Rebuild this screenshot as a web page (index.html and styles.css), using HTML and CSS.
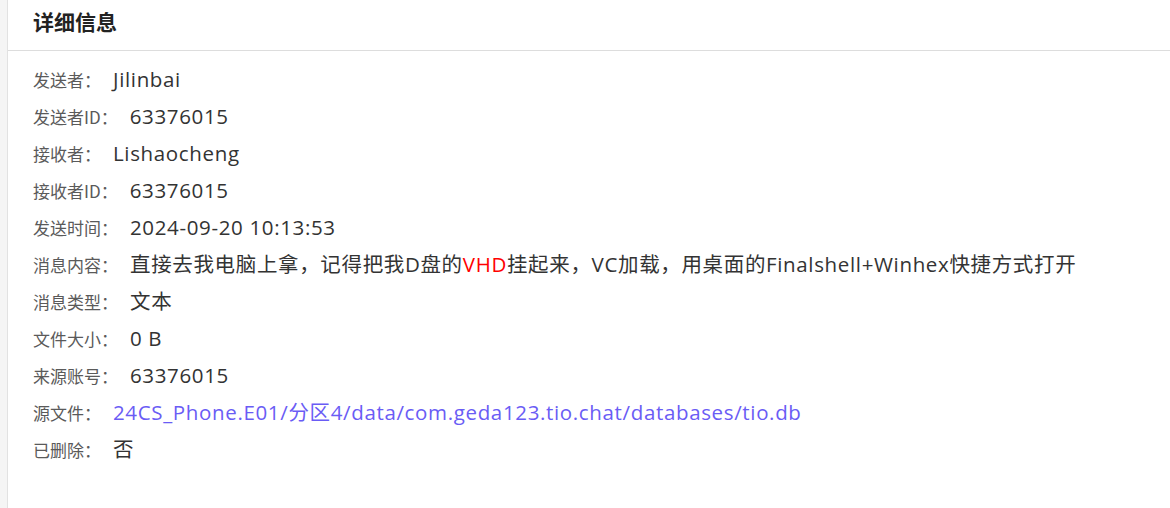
FILE: index.html
```html
<!DOCTYPE html>
<html lang="zh-CN">
<head>
<meta charset="utf-8">
<title>详细信息</title>
<link rel="stylesheet" href="styles.css">
</head>
<body>
<div class="page">
  <div class="side"></div>
  <div class="panel">
    <div class="header"><h2 class="title">详细信息</h2></div>
    <div class="content">
      <div class="row"><span class="label">发送者：</span><span class="value">Jilinbai</span></div>
      <div class="row"><span class="label">发送者ID：</span><span class="value">63376015</span></div>
      <div class="row"><span class="label">接收者：</span><span class="value">Lishaocheng</span></div>
      <div class="row"><span class="label">接收者ID：</span><span class="value">63376015</span></div>
      <div class="row"><span class="label">发送时间：</span><span class="value">2024-09-20 10:13:53</span></div>
      <div class="row"><span class="label">消息内容：</span><span class="value">直接去我电脑上拿，记得把我D盘的<span class="hl">VHD</span>挂起来，VC加载，用桌面的Finalshell+Winhex快捷方式打开</span></div>
      <div class="row"><span class="label">消息类型：</span><span class="value">文本</span></div>
      <div class="row"><span class="label">文件大小：</span><span class="value">0 B</span></div>
      <div class="row"><span class="label">来源账号：</span><span class="value">63376015</span></div>
      <div class="row"><span class="label">源文件：</span><span class="value link">24CS_Phone.E01/分区4/data/com.geda123.tio.chat/databases/tio.db</span></div>
      <div class="row"><span class="label">已删除：</span><span class="value">否</span></div>
    </div>
  </div>
</div>
</body>
</html>
```

FILE: styles.css
```css
html, body {
  margin: 0;
  padding: 0;
  height: 100%;
  background: #ffffff;
}
.page {
  display: flex;
  height: 508px;
  font-family: "Open Sans", "Noto Sans CJK SC", sans-serif;
}
.side {
  width: 7px;
  background: #f5f5f5;
  border-right: 1px solid #e2e2e2;
}
.panel {
  flex: 1;
  background: #ffffff;
}
.header {
  height: 50px;
  border-bottom: 1px solid #dddddd;
  display: flex;
  align-items: center;
  padding-left: 25px;
}
.title {
  margin: 0;
  font-family: "Noto Sans CJK SC", sans-serif;
  font-size: 21px;
  font-weight: 700;
  color: #222222;
  line-height: 1;
  position: relative;
  top: -4px;
}
.content {
  padding: 10px 0 0 25px;
}
.row {
  display: flex;
  align-items: center;
  height: 37px;
}
.label {
  font-family: "Noto Sans CJK SC", sans-serif;
  font-size: 17px;
  color: #5a5a5a;
  margin-right: 12px;
}
.value {
  font-size: 20.5px;
  letter-spacing: 0.65px;
  color: #333333;
  line-height: 1;
}
.hl {
  color: #ff0000;
}
.link {
  color: #6a5cf5;
}
```
